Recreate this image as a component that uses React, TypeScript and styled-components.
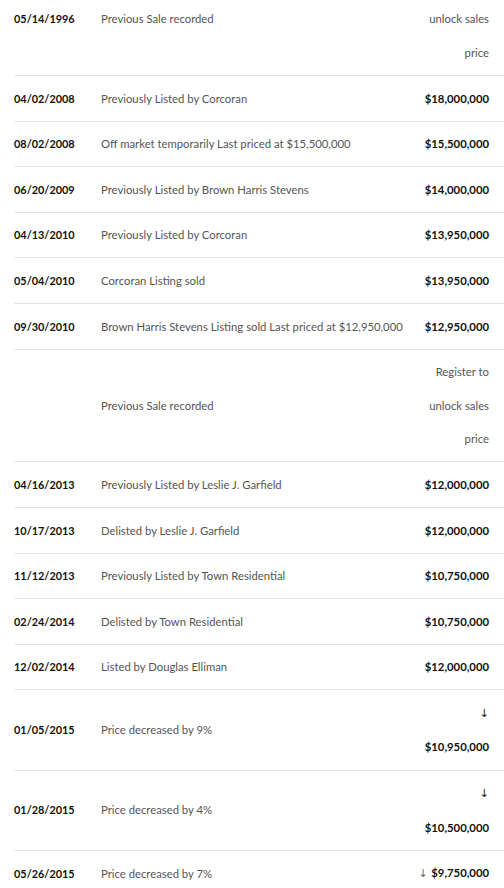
import React from "react";
import styled, { createGlobalStyle } from "styled-components";

const Global = createGlobalStyle`
  html, body { margin: 0; padding: 0; background: #fff; }
  body { font-family: Lato, "Noto Sans", sans-serif; -webkit-font-smoothing: antialiased; }
`;

const Table = styled.div`
  padding-left: 14px;
  display: flex;
  flex-direction: column;
`;

const Row = styled.div<{ $last?: boolean; $top?: boolean }>`
  display: grid;
  grid-template-columns: 87px 1fr auto;
  align-items: ${(p) => (p.$top ? "start" : "center")};
  padding: ${(p) => (p.$top ? "2.4px" : "5.5px")} 15px 5.5px 0;
  border-bottom: ${(p) => (p.$last ? "none" : "1px solid #e4e4e4")};
  line-height: 33.6px;
`;

const DateCell = styled.div`
  font-size: 10.9px;
  font-weight: 700;
  color: #111;
`;

const Desc = styled.div`
  font-size: 11.3px;
  color: #555;
`;

const Price = styled.div`
  font-size: 11.3px;
  font-weight: 700;
  color: #111;
  text-align: right;
`;

const Muted = styled.div`
  font-size: 11.3px;
  color: #555;
  text-align: right;
`;

const Arrow = styled.span<{ $gray?: boolean }>`
  font-weight: 400;
  color: ${(p) => (p.$gray ? "#666" : "#111")};
  font-family: "DejaVu Sans", sans-serif;
  font-size: 11px;
`;

type Entry = {
  date?: string;
  desc: string;
  price?: string;
  locked?: string[];
  arrow?: "stack" | "inline";
};

const rows: Entry[] = [
  { date: "05/14/1996", desc: "Previous Sale recorded", locked: ["unlock sales", "price"] },
  { date: "04/02/2008", desc: "Previously Listed by Corcoran", price: "$18,000,000" },
  { date: "08/02/2008", desc: "Off market temporarily Last priced at $15,500,000", price: "$15,500,000" },
  { date: "06/20/2009", desc: "Previously Listed by Brown Harris Stevens", price: "$14,000,000" },
  { date: "04/13/2010", desc: "Previously Listed by Corcoran", price: "$13,950,000" },
  { date: "05/04/2010", desc: "Corcoran Listing sold", price: "$13,950,000" },
  { date: "09/30/2010", desc: "Brown Harris Stevens Listing sold Last priced at $12,950,000", price: "$12,950,000" },
  { desc: "Previous Sale recorded", locked: ["Register to", "unlock sales", "price"] },
  { date: "04/16/2013", desc: "Previously Listed by Leslie J. Garfield", price: "$12,000,000" },
  { date: "10/17/2013", desc: "Delisted by Leslie J. Garfield", price: "$12,000,000" },
  { date: "11/12/2013", desc: "Previously Listed by Town Residential", price: "$10,750,000" },
  { date: "02/24/2014", desc: "Delisted by Town Residential", price: "$10,750,000" },
  { date: "12/02/2014", desc: "Listed by Douglas Elliman", price: "$12,000,000" },
  { date: "01/05/2015", desc: "Price decreased by 9%", price: "$10,950,000", arrow: "stack" },
  { date: "01/28/2015", desc: "Price decreased by 4%", price: "$10,500,000", arrow: "stack" },
  { date: "05/26/2015", desc: "Price decreased by 7%", price: "$9,750,000", arrow: "inline" },
];

export default function App() {
  return (
    <>
      <Global />
      <Table>
        {rows.map((r, i) => (
          <Row key={i} $top={i === 0} $last={i === rows.length - 1}>
            <DateCell>{r.date ?? ""}</DateCell>
            <Desc>{r.desc}</Desc>
            {r.locked ? (
              <Muted>
                {r.locked.map((l, j) => (
                  <div key={j}>{l}</div>
                ))}
              </Muted>
            ) : (
              <Price>
                {r.arrow === "stack" && (
                  <div>
                    <Arrow>↓</Arrow>
                  </div>
                )}
                {r.arrow === "inline" && <Arrow $gray>↓ </Arrow>}
                {r.price}
              </Price>
            )}
          </Row>
        ))}
      </Table>
    </>
  );
}
